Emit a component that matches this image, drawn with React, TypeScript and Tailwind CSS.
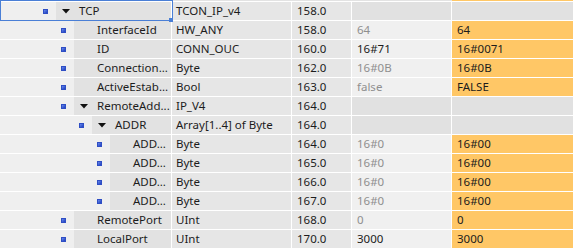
type Row = {
  level: number;
  name: string;
  type: string;
  offset: string;
  struct?: boolean;
  start?: string;
  dim?: boolean;
  monitor?: string;
};

const rows: Row[] = [
  { level: 0, name: "TCP", type: "TCON_IP_v4", offset: "158.0", struct: true },
  { level: 1, name: "InterfaceId", type: "HW_ANY", offset: "158.0", start: "64", dim: true, monitor: "64" },
  { level: 1, name: "ID", type: "CONN_OUC", offset: "160.0", start: "16#71", monitor: "16#0071" },
  { level: 1, name: "Connection...", type: "Byte", offset: "162.0", start: "16#0B", dim: true, monitor: "16#0B" },
  { level: 1, name: "ActiveEstab...", type: "Bool", offset: "163.0", start: "false", dim: true, monitor: "FALSE" },
  { level: 1, name: "RemoteAdd...", type: "IP_V4", offset: "164.0", struct: true },
  { level: 2, name: "ADDR", type: "Array[1..4] of Byte", offset: "164.0", struct: true },
  { level: 3, name: "ADD...", type: "Byte", offset: "164.0", start: "16#0", dim: true, monitor: "16#00" },
  { level: 3, name: "ADD...", type: "Byte", offset: "165.0", start: "16#0", dim: true, monitor: "16#00" },
  { level: 3, name: "ADD...", type: "Byte", offset: "166.0", start: "16#0", dim: true, monitor: "16#00" },
  { level: 3, name: "ADD...", type: "Byte", offset: "167.0", start: "16#0", dim: true, monitor: "16#00" },
  { level: 1, name: "RemotePort", type: "UInt", offset: "168.0", start: "0", dim: true, monitor: "0" },
  { level: 1, name: "LocalPort", type: "UInt", offset: "170.0", start: "3000", monitor: "3000" },
];

// indent area per tree level (square + light gutter)
const gutter = ["w-[56px] pl-[43px]", "w-[74px] pl-[61px]", "w-[92px] pl-[79px]", "w-[110px] pl-[97px]"];

function Square() {
  return (
    <div className="h-[5px] w-[5px] bg-gradient-to-br from-[#6a88ec] to-[#1f3fc0] border border-[#2f4ec4]" />
  );
}

function Caret() {
  return (
    <svg width="8" height="5" viewBox="0 0 8 5" className="shrink-0">
      <path d="M0 0 H8 L4 4.5 Z" fill="#111" />
    </svg>
  );
}

export default function App() {
  return (
    <div
      className="relative w-[573px] h-[249px] overflow-hidden bg-white text-[11.5px] text-[#1c1c1c]"
      style={{ fontFamily: '"Noto Sans", "Open Sans", sans-serif' }}
    >
      <div className="flex h-[1px] border-b border-white box-content">
        <div className="w-[452px] bg-[#e3e3e3]" />
        <div className="flex-1 bg-[#ffc766]" />
      </div>
      {rows.map((r, i) => (
        <div key={i} className="flex h-[19px] border-b border-white">
          <div className="flex w-[172px] border-r border-white">
            <div className={`flex items-center bg-[#efefef] ${gutter[r.level]}`}>
              <Square />
            </div>
            <div className="flex min-w-0 flex-1 items-center overflow-hidden bg-[#e2e2e2] pl-[6px]">
              <div className="w-[17px] shrink-0">{r.struct && <Caret />}</div>
              <span className="whitespace-nowrap leading-none">{r.name}</span>
            </div>
          </div>
          <div className="flex w-[120px] items-center border-r border-white bg-[#e6e6e6] pl-[4px] whitespace-nowrap">
            {r.type}
          </div>
          <div className="flex w-[60px] items-center border-r border-white bg-[#e6e6e6] pl-[5px]">
            {r.offset}
          </div>
          {r.struct ? (
            <>
              <div className="w-[100px] border-r border-white bg-[#e1e1e1]" />
              <div className="flex-1 bg-[#e1e1e1]" />
            </>
          ) : (
            <>
              <div
                className={`flex w-[100px] items-center border-r border-white bg-[#f0f0f0] pl-[5px] ${
                  r.dim ? "text-[#8f8f8f]" : "text-[#1c1c1c]"
                }`}
              >
                {r.start}
              </div>
              <div className="flex flex-1 items-center bg-[#ffc766] pl-[5px]">{r.monitor}</div>
            </>
          )}
        </div>
      ))}
      {/* selection frame on TCP name cell */}
      <div className="absolute left-0 top-0 h-[21px] w-[173px] border border-[#4a7fd6]" />
      <div className="absolute left-[169px] top-[18px] h-[4px] w-[4px] bg-[#4a7fd6]" />
    </div>
  );
}
